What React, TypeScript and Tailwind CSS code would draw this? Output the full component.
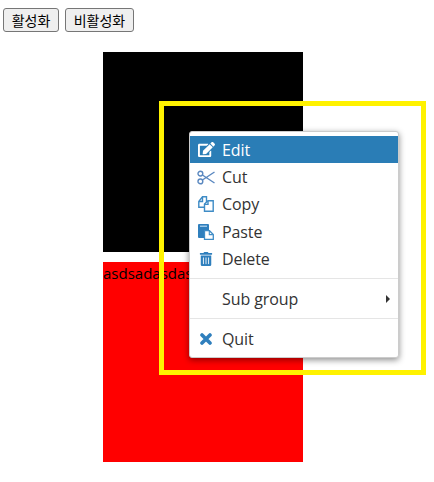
import { FaEdit, FaTrashAlt } from "react-icons/fa";

const font = "font-['Open_Sans','Noto_Sans',sans-serif]";

function CutIcon() {
  return (
    <svg width="18" height="15" viewBox="0 0 18 15" fill="none" stroke="#5a88c0" strokeWidth="1.4">
      <circle cx="3.4" cy="3.6" r="2.4" />
      <circle cx="3.4" cy="11.4" r="2.4" />
      <path d="M5.4 5 17.5 13M5.4 10 17.5 2" />
    </svg>
  );
}

function CopyIcon() {
  return (
    <svg width="16" height="16" viewBox="0 0 16 16" fill="#fff" stroke="#3f8cc6" strokeWidth="1.4">
      <path d="M.8 5.5 4.5.8h4v10.5H.8z" />
      <path d="M4.5 1v4.5H1" fill="none" />
      <path d="M6.5 8 10 4.7h5.2v10.6H6.5z" />
      <path d="M10 5v3.4H6.8" fill="none" />
    </svg>
  );
}

function PasteIcon() {
  return (
    <svg width="16" height="16" viewBox="0 0 16 16">
      <rect x="0" y="0" width="11" height="14" rx="1" fill="#2f7fbd" />
      <rect x="2" y="1.5" width="7" height="1.5" fill="#9cc6e6" />
      <path d="M6.5 6.7h5l3.8 3.8v4.8H6.5z" fill="#fff" stroke="#3f8cc6" strokeWidth="1.3" />
      <path d="M11.3 7v3.6h3.6" fill="none" stroke="#3f8cc6" strokeWidth="1.1" />
    </svg>
  );
}

function QuitIcon() {
  return (
    <svg width="12" height="12" viewBox="0 0 12 12" stroke="#2f7fbd" strokeWidth="3.6" strokeLinecap="round">
      <path d="M2 2l8 8M10 2l-8 8" />
    </svg>
  );
}

type Item = { label: string; icon?: React.ReactNode; active?: boolean };

const top: Item[] = [
  { label: "Edit", icon: <FaEdit size={17} color="#fff" />, active: true },
  { label: "Cut", icon: <CutIcon /> },
  { label: "Copy", icon: <CopyIcon /> },
  { label: "Paste", icon: <PasteIcon /> },
  { label: "Delete", icon: <FaTrashAlt size={14} color="#2f7fbd" /> },
];

function Row({ label, icon, active }: Item) {
  return (
    <div
      className={`flex h-[27.4px] items-center ${active ? "bg-[#2a7db6] text-white" : "text-[#333333]"}`}
    >
      <span className="flex w-[32px] shrink-0 items-center justify-center">{icon}</span>
      <span>{label}</span>
    </div>
  );
}

export default function App() {
  return (
    <div className="relative h-[482px] w-[434px] overflow-hidden bg-white">
      <div className="flex gap-[6px] pl-[3px] pt-[8px] font-['Noto_Sans_CJK_KR',sans-serif] text-[14px] text-black">
        <button className="h-[24px] w-[56px] rounded-[3px] border border-[#767676] bg-[#efefef]">활성화</button>
        <button className="h-[24px] w-[69px] rounded-[3px] border border-[#767676] bg-[#efefef]">비활성화</button>
      </div>

      <div className="ml-[103px] mt-[20px] w-[200px]">
        <div className="h-[200px] bg-black" />
        <div className="mt-[10px] h-[200px] whitespace-nowrap bg-[#ff0000] font-['Open_Sans',sans-serif] text-[15px] leading-[23px] text-black">
          asdsadasdasdasd
        </div>
      </div>

      <div className="absolute left-[159px] top-[101px] h-[274px] w-[267px] border-[5px] border-[#fff200]" />

      <div
        className={`absolute left-[189px] top-[131px] w-[210px] rounded-[3px] border border-[#cccccc] bg-white pb-[5px] pt-[4px] text-[16px] tracking-[-0.1px] shadow-[0_2px_6px_rgba(0,0,0,0.45)] ${font}`}
      >
        {top.map((item) => (
          <Row key={item.label} {...item} />
        ))}
        <div className="mt-[5px] border-t border-[#e5e5e5]" />
        <div className="relative mt-[7px] flex h-[27px] items-center pl-[32px] text-[#333333]">
          Sub group
          <span className="absolute right-[8px] top-[9px] border-y-[4px] border-l-[4px] border-y-transparent border-l-[#333333]" />
        </div>
        <div className="mt-[5px] border-t border-[#e5e5e5]" />
        <div className="mt-[6px]">
          <Row label="Quit" icon={<QuitIcon />} />
        </div>
      </div>
    </div>
  );
}
